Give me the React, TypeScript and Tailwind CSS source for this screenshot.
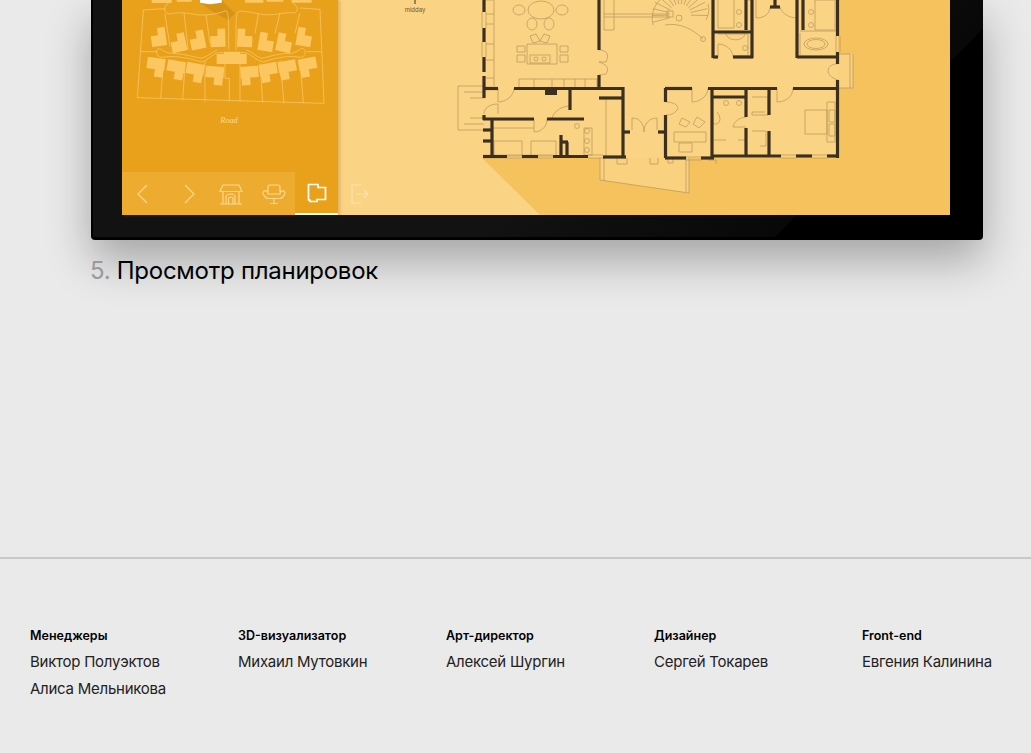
const credits = [
  { role: "Менеджеры", names: ["Виктор Полуэктов", "Алиса Мельникова"] },
  { role: "3D-визуализатор", names: ["Михаил Мутовкин"] },
  { role: "Арт-директор", names: ["Алексей Шургин"] },
  { role: "Дизайнер", names: ["Сергей Токарев"] },
  { role: "Front-end", names: ["Евгения Калинина"] },
];

// [x1, y1, x2, y2] in page pixels, the plan's viewBox matches the screenshot
const walls: number[][] = [
  [484, 0, 484, 12], [484, 28, 484, 42], [484, 57, 484, 72], [484, 76, 484, 98],
  [483, 88.5, 498, 88.5], [514, 88.5, 623, 88.5], [599, 0, 599, 50], [599, 75, 599, 88],
  [599, 98, 623, 98], [623, 87, 623, 158], [483, 156.5, 507, 156.5], [522, 156.5, 538, 156.5],
  [553, 156.5, 588, 156.5], [603, 157, 626, 157], [483, 119, 534, 119], [547, 119, 584, 119],
  [492, 119, 492, 156], [570, 90, 570, 110], [484, 115, 484, 120], [483, 130, 491, 130],
  [483, 141, 491, 141], [561, 135, 561, 156], [567, 142, 567, 156], [561, 142, 568, 142],
  [623, 132, 630, 132], [658, 132, 666, 132], [665.5, 88, 665.5, 102], [665.5, 115, 665.5, 158],
  [665, 88.5, 692, 88.5], [665, 158, 686, 158], [701, 158, 714, 158], [712, 87, 712, 158],
  [708, 88.5, 777, 88.5], [712, 97, 746, 97], [746, 88, 746, 117], [746, 128, 746, 156],
  [712, 156, 781, 156], [796, 156, 812, 156], [827, 156, 838, 156], [837.5, 80, 837.5, 158],
  [793, 88.5, 837, 88.5], [769, 90, 769, 115], [769, 131, 769, 156], [837.5, 0, 837.5, 36],
  [837.5, 52, 837.5, 64], [797, 0, 797, 58], [797, 57, 837, 57], [713, 0, 713, 58],
  [713, 57, 718, 57], [733, 57, 753, 57], [713, 32, 752, 32], [752, 0, 752, 58],
  [746, 0, 746, 30], [803, 0, 803, 30], [775, 0, 775, 7], [770, 7, 780, 7],
];

// thin furniture and fitting lines
const fittings = [
  "M458 86H484M458 130H484M458 86V130M464 92H484M464 124H484M470 98H484M470 118H484",
  "M494 0V86M486 0H494M486 14H494M486 24H494M486 44H494M486 60H494M486 78H494",
  "M482 12V28M486 12V28M482 42V57M486 42V57M836 36V52M840 36V52",
  "M507 155H522M507 158H522M538 155H553M538 158H553M588 155H603M588 158H603",
  "M781 155H796M781 158H796M812 155H827M812 158H827M686 157H701M686 160H701",
  "M604 0V30H614M614 30V0M604 14H670M604 17H670",
  "M519 79H597V88H519ZM534 79V88M552 79V88M564 79V88M575 79V88M585 79V88",
  "M527 44H557V64H527ZM517 46H525V52H517ZM517 55H525V62H517ZM560 46H568V52H560ZM560 55H568V62H560Z",
  "M533 43L530 36L536 34L540 41ZM547 43L550 36L544 34L540 41Z",
  "M492 120H534M492 128H534M494 141H522V156H494ZM531 141H556V156H531Z",
  "M584 128H592V155H584ZM606 98V157M600 158V180M604 158V181M686 158V192M689 158V193M600 180L689 193",
  "M718 0V28H734V0M718 34H748V56H734M745 0H752",
  "M800 31H836M800 33V56H836M815 0H835V30H815Z",
  "M838 54H850V88H838M853 54V88H850",
  "M674 132H706V142H674ZM679 143H692V152H679ZM682 118L690 122L686 127L679 124ZM697 117L705 122L699 128L693 124Z",
  "M805 110H827V134H805ZM827 102H835V142H827ZM829 110H835V122H829ZM829 124H835V136H829Z",
  "M752 97H768V115H752V112H765M752 131H766V146H760",
  "M714 140H726M738 140H745M717 112C724 120 717 128 712 122",
  "M668 158H673V163H668ZM617 158V164H627V158M650 158V164H658V158M708 160H716V164",
  "M665 25C680 22 694 30 703 39",
];

const curves = [
  "M498 88V102C506 102 514 96 514 88",
  "M484 114C484 108 490 104 498 104V114",
  "M534 119V132C540 132 547 128 547 119",
  "M570 106C562 106 554 111 552 118",
  "M632 118V130M632 118C640 118 644 124 644 132",
  "M657 118V130M657 118C649 118 644 124 644 132",
  "M692 88V102C700 102 708 96 708 88",
  "M666 102C674 102 680 106 677 110C674 114 670 115 666 115",
  "M746 117C738 118 734 122 733 127H746",
  "M777 88V102C784 102 793 98 793 88",
  "M718 57V44C726 44 733 50 733 57",
  "M837 64C826 64 824 76 838 80",
  "M756 0V18C764 18 770 14 770 7M780 7C782 14 790 18 797 18V0",
  "M599 50C606 50 610 54 606 62C602 62 600 62 599 62M599 62C606 64 610 68 606 74C604 74 601 75 599 75",
];

// spiral stair treads fan out from one point, the top is cut by the screen edge
const treads = Array.from({ length: 15 }, (_, i) => {
  const a = ((165 + i * 14) * Math.PI) / 180;
  return `M${680 + 11 * Math.cos(a)} ${15 + 11 * Math.sin(a)}L${680 + 28 * Math.cos(a)} ${15 + 28 * Math.sin(a)}`;
}).join("");

// site plan uses viewBox units of a third of a pixel, [x, y, angle]
const topLots = [
  [118, 113, -8], [178, 130, -12], [235, 122, -12], [296, 116, -2],
];
const topLotsRight = [
  [372, 116, 2], [436, 128, 10], [490, 130, 12], [550, 113, 10],
];
const lowLots = [
  [108, 200, 8], [168, 208, 10], [225, 216, 10], [285, 225, 4],
];
const lowLotsRight = [
  [388, 225, -4], [445, 216, -10], [502, 208, -10], [563, 200, -10],
];

function Lot({ at, d, flip }: { at: number[]; d: string; flip?: boolean }) {
  return (
    <path
      transform={`translate(${at[0]} ${at[1]}) rotate(${at[2]}) scale(${flip ? -1 : 1} 1)`}
      d={d}
    />
  );
}

const stepLot = "M-25 -8H-3V-30H20V25H-25Z";
const lowLot = "M-28 -26H26V8H24V30H-2V8H-28Z";

function SitePlan() {
  return (
    <svg viewBox="6 0 648 516" className="w-[216px] h-[172px] block">
      <path d="M240 8L305 0L345 40L325 60L285 40Z" fill="#c98812" opacity="0.55" />
      <g fill="none" stroke="#f5c765" strokeWidth="2.4">
        <path d="M52 293L70 30L135 26M52 293L612 310L600 28L540 24" />
        <path d="M145 10C128 18 132 44 150 42C170 36 200 38 230 44C260 48 300 40 318 32C326 36 326 60 326 148" />
        <path d="M518 10C538 18 534 42 518 38C490 36 460 48 430 44C400 38 370 32 358 34C346 38 348 60 348 150" />
        <path d="M118 145C104 148 108 174 128 172C160 166 200 172 245 186C262 182 275 165 292 158H378C395 165 410 182 430 186C470 172 510 166 540 172C560 172 560 146 545 145C535 150 530 158 510 160C480 160 445 170 425 175C405 168 390 152 378 150M118 145C130 150 135 160 160 160C195 162 225 172 245 175C265 168 278 155 292 150" />
        <path d="M192 40L205 150M258 45L270 130M135 42L150 140M415 42L405 100M480 40L465 100M540 38L525 100M60 155H110M560 155H605" />
        <path d="M130 190L122 295M195 195L188 300M255 185V305M315 190V235H328V305M360 305V190M420 190L428 308M480 180L492 310M540 180L550 310" />
      </g>
      <g fill="#fcc661">
        {topLots.map((at, i) => (
          <Lot key={i} at={at} d={stepLot} />
        ))}
        {topLotsRight.map((at, i) => (
          <Lot key={i} at={at} d={stepLot} flip />
        ))}
        {lowLots.map((at, i) => (
          <Lot key={i} at={at} d={lowLot} />
        ))}
        {lowLotsRight.map((at, i) => (
          <Lot key={i} at={at} d={lowLot} flip />
        ))}
        <path d="M290 162H312V155H360V162H380V192H290Z" />
        <path d="M95 0H155V9H95ZM170 0H215V5H170ZM375 0H430V8H375ZM440 0H490V5H440ZM515 0H575V8H515Z" />
      </g>
      <path d="M240 0H305V8L270 13L240 8Z" fill="#ffffff" />
      <text
        x="327"
        y="369"
        textAnchor="middle"
        className="font-['Liberation_Serif',serif] italic text-[25px]"
        fill="#fbdb9a"
      >
        Road
      </text>
    </svg>
  );
}

function FloorPlan() {
  return (
    <svg viewBox="338 0 612 215" className="absolute inset-0 w-[612px] h-[215px]">
      <path d="M482 158L540 215H950V0H838V158Z" fill="#f5c25e" />
      <path d="M600 158V180L689 193V158Z" fill="#fad17f" />
      <path d="M853 54H838V88H853Z" fill="#fad17f" />
      <g fill="none" stroke="#b89a5e" strokeWidth="0.75">
        {fittings.map((d, i) => (
          <path key={i} d={d} />
        ))}
        <path d={treads} />
        <path d="M653 25C650 12 656 4 660 0M708 4C710 10 708 16 706 20" />
        <rect x="667" y="11" width="6" height="6" />
        <circle cx="679" cy="18" r="3" />
        <circle cx="703" cy="39" r="2.5" />
        <ellipse cx="541" cy="10" rx="13" ry="9" />
        <ellipse cx="519" cy="10" rx="6" ry="5" />
        <ellipse cx="562" cy="10" rx="6" ry="5" />
        <ellipse cx="532" cy="24" rx="5" ry="6" />
        <ellipse cx="549" cy="24" rx="5" ry="6" />
        <rect x="530" y="55" width="20" height="8" />
        <circle cx="536" cy="59" r="2" />
        <circle cx="544" cy="59" r="2" />
        <ellipse cx="816" cy="44" rx="12" ry="6" />
        <ellipse cx="816" cy="44" rx="9" ry="4.5" />
        <circle cx="739" cy="12" r="2.5" />
        <circle cx="739" cy="25" r="2.5" />
        <circle cx="811" cy="12" r="2.5" />
        <circle cx="811" cy="25" r="2.5" />
        <circle cx="745" cy="48" r="2.5" />
        <circle cx="726" cy="103" r="2.5" />
        <circle cx="739" cy="103" r="2.5" />
        <circle cx="587" cy="131" r="2.5" />
        <circle cx="587" cy="141" r="2.5" />
        <circle cx="587" cy="150" r="2.5" />
        <circle cx="577" cy="126" r="2.5" />
        <path d="M726 33C726 42 745 42 745 33" />
        {curves.map((d, i) => (
          <path key={i} d={d} />
        ))}
      </g>
      <g stroke="#3b3020" strokeWidth="3.2" fill="none">
        {walls.map(([x1, y1, x2, y2], i) => (
          <line key={i} x1={x1} y1={y1} x2={x2} y2={y2} />
        ))}
      </g>
      <rect x="545" y="90" width="12" height="5" fill="#3b3020" />
      <line x1="415" y1="0" x2="415" y2="4" stroke="#3b3020" strokeWidth="1" />
      <text x="415" y="12" textAnchor="middle" className="font-['Inter',sans-serif] text-[6px]" fill="#6b5a35">
        midday
      </text>
    </svg>
  );
}

function NavIcon({ children, active }: { children: React.ReactNode; active?: boolean }) {
  return (
    <svg
      viewBox="0 0 24 24"
      className="w-6 h-6"
      fill="none"
      stroke={active ? "#ffffff" : "#fbd88f"}
      strokeWidth={active ? 1.7 : 1.2}
    >
      {children}
    </svg>
  );
}

export default function App() {
  return (
    <div className="h-[753px] overflow-hidden flex flex-col bg-[#eaeaea] font-['Inter',sans-serif] text-black">
      <div className="ml-[91px] w-[892px] h-[240px] shrink-0 pl-[29px] pr-[33px] pb-[22px] border-l-2 border-b-[3px] border-black rounded-b-[4px] bg-[linear-gradient(135deg,#121212_55%,#080808_81.5%,#000000_81.5%)] shadow-[0_20px_45px_rgba(0,0,0,0.3)]">
        <div className="flex h-[215px] bg-[#fbd384]">
          <div className="w-[216px] flex flex-col bg-[#e9a11b] shadow-[2px_0_3px_rgba(150,100,20,0.3)] z-10">
            <SitePlan />
            <div className="flex h-[43px]">
              <div className="w-[173px] flex bg-[#edac30]">
                <div className="flex-1 flex items-center justify-center pr-[3px]">
                  <NavIcon>
                    <path d="M16 3L7 12L16 21" />
                  </NavIcon>
                </div>
                <div className="flex-1 flex items-center justify-center">
                  <NavIcon>
                    <path d="M8 3L17 12L8 21" />
                  </NavIcon>
                </div>
                <div className="flex-1 flex items-center justify-center">
                  <NavIcon>
                    <path d="M4 3H20L23 9.5H1ZM4 9.5V22M20 9.5V22M1 22H23M7 22V15Q7 12 11.5 12Q16 12 16 15V22M9.5 22V16.5Q9.5 15 11.5 15Q14 15 14 16.5V22" />
                  </NavIcon>
                </div>
                <div className="flex-1 flex items-center justify-center">
                  <NavIcon>
                    <path d="M6 10V5Q6 3 8 3H16Q18 3 18 5V10M6 12C6 8 1 8 1 11C1 13 4 16.5 6 16.5H18C20 16.5 23 13 23 11C23 8 18 8 18 12ZM12 16.5V21M8 21.5H16" />
                  </NavIcon>
                </div>
              </div>
              <div className="flex-1 flex items-center justify-center border-b-2 border-white">
                <NavIcon active>
                  <path d="M3.5 3.5H13V6.5H20.5V18.5H12V20.5H5V19H3.5Z" />
                </NavIcon>
              </div>
            </div>
          </div>
          <div className="relative flex-1">
            <FloorPlan />
            <div className="absolute left-[9px] bottom-[9px]">
              <svg viewBox="0 0 24 24" className="w-6 h-6" fill="none" stroke="#fde3ac" strokeWidth="1.2">
                <path d="M14 3H5V21H14M9 12H21M17 8L21 12L17 16" />
              </svg>
            </div>
          </div>
        </div>
      </div>

      <p className="ml-[90px] mt-[15px] text-[24px] leading-[32px] tracking-[-0.27px]">
        <span className="text-[#999999]">5.</span> Просмотр планировок
      </p>

      <footer className="mt-auto h-[196px] border-t-2 border-[#c8c8c8] pl-[30px] pt-[68px] grid grid-cols-[208px_208px_208px_208px_1fr]">
        {credits.map((c) => (
          <div key={c.role}>
            <h4 className="text-[12.5px] leading-[18px] font-semibold">{c.role}</h4>
            <div className="mt-[3px] text-[15px] leading-[27px] tracking-[-0.25px] text-[#222222]">
              {c.names.map((n) => (
                <p key={n}>{n}</p>
              ))}
            </div>
          </div>
        ))}
      </footer>
    </div>
  );
}
